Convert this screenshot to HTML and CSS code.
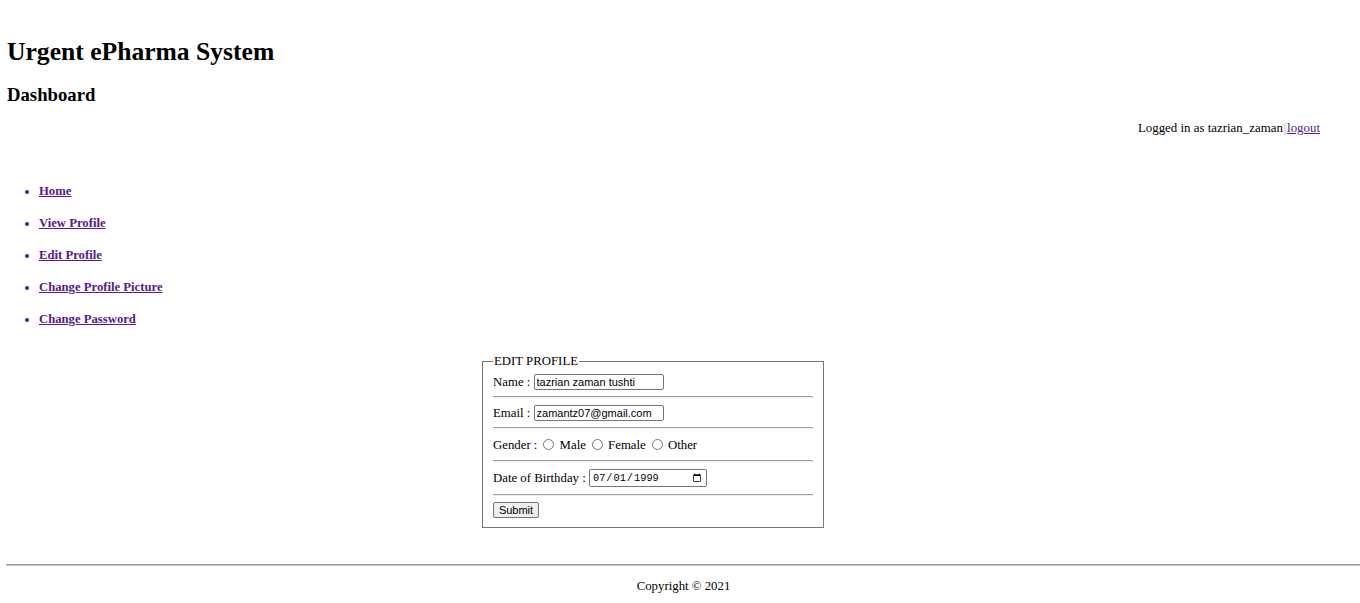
FILE: index.html
```html
<!DOCTYPE html>
<html>
<head>
<meta charset="utf-8">
<title>Urgent ePharma System</title>
<link rel="stylesheet" href="styles.css">
</head>
<body>
<header class="header">
  <h1 class="title">Urgent ePharma System</h1>
  <h3 class="subtitle">Dashboard</h3>
</header>
<div class="userbar">Logged in as tazrian_zaman<span class="sep">||</span><a href="#">logout</a></div>
<ul class="nav">
  <li><a href="#">Home</a></li>
  <li><a href="#">View Profile</a></li>
  <li><a href="#">Edit Profile</a></li>
  <li><a href="#">Change Profile Picture</a></li>
  <li><a href="#">Change Password</a></li>
</ul>
<main class="main">
  <form class="form">
    <fieldset class="box">
      <legend class="legend">EDIT PROFILE</legend>
      <div class="row row-first">Name : <input class="text" type="text" value="tazrian zaman tushti"></div>
      <hr class="sepline">
      <div class="row">Email : <input class="text" type="text" value="zamantz07@gmail.com"></div>
      <hr class="sepline">
      <div class="row row-gender">Gender :<input class="radio" type="radio" name="g"> Male<input class="radio" type="radio" name="g"> Female<input class="radio" type="radio" name="g"> Other</div>
      <hr class="sepline">
      <div class="row row-date">Date of Birthday : <input class="date" type="date" value="1999-07-01"></div>
      <hr class="sepline sepline-last">
      <div class="row"><input class="btn" type="submit" value="Submit"></div>
    </fieldset>
  </form>
</main>
<footer class="footer">
  <hr class="footline">
  <p class="copy">Copyright © 2021</p>
</footer>
</body>
</html>
```
FILE: styles.css
```css
html, body {
  margin: 0;
  padding: 0;
  background: #fff;
}
body {
  padding: 0 0 0 7px;
  font-family: "Liberation Serif", "Times New Roman", serif;
  color: #000;
}
a {
  color: #551a8b;
}
.header {
  padding-top: 33px;
}
.title {
  font-size: 25.6px;
  line-height: 37px;
  margin: 0;
  font-weight: bold;
}
.subtitle {
  font-size: 18.72px;
  line-height: 22px;
  margin: 14px 0 0;
  font-weight: bold;
}
.userbar {
  margin-top: 14px;
  font-size: 12.9px;
  line-height: 16px;
  text-align: right;
  padding-right: 40px;
}
.sep {
  color: #cfc7b8;
  letter-spacing: -1px;
  margin-right: 1px;
}
.nav {
  margin: 47px 0 0;
  padding-left: 32px;
  list-style: disc;
  color: #551a8b;
  font-size: 12.7px;
  font-weight: bold;
}
.nav li {
  line-height: 16px;
  margin-bottom: 16px;
}
.main {
  padding-left: 475px;
  margin-top: 26px;
}
.form {
  margin: 0;
}
.box {
  margin: 0;
  width: 320px;
  border: 1px solid #767676;
  padding: 0 10px 8px;
  font-size: 12.8px;
}
.legend {
  padding: 0 1px;
  line-height: 16px;
}
.row {
  height: 18px;
  line-height: 18px;
  display: flex;
  align-items: center;
  white-space: pre;
}
.row-first {
  margin-top: 4px;
}
.row-gender {
  height: 20px;
}
.row-date {
  height: 20px;
}
.sepline {
  margin: 5px 0 6px;
  border: 0;
  border-top: 1px solid #a0a0a0;
  border-bottom: 1px solid #eee;
}
.sepline-last {
  margin-top: 6px;
  margin-bottom: 5px;
}
.text {
  box-sizing: border-box;
  width: 130px;
  height: 16px;
  font-family: "Liberation Sans", Arial, sans-serif;
  font-size: 11px;
  padding: 0 2px;
  margin: 0;
  border: 1px solid #767676;
  border-radius: 2px;
}
.radio {
  margin: 0 2px 2px 6px;
  width: 11px;
  height: 11px;
}
.date {
  box-sizing: border-box;
  width: 118px;
  height: 18px;
  font-family: "Liberation Mono", "Courier New", monospace;
  font-size: 10.3px;
  padding: 0 2px;
  margin: 0;
  border: 1px solid #767676;
  border-radius: 2px;
}
.btn {
  box-sizing: border-box;
  height: 16px;
  width: 46px;
  font-family: "Liberation Sans", Arial, sans-serif;
  font-size: 11px;
  padding: 0;
  margin: 0;
  background: #efefef;
  border: 1px solid #767676;
  border-radius: 2px;
}
.footer {
  margin-top: 36px;
}
.footline {
  margin: 0 0 0 -1px;
  border: 0;
  border-top: 1px solid #9a9a9a;
  border-bottom: 1px solid #c8c8c8;
}
.copy {
  margin: 12px 0 0;
  text-align: center;
  font-size: 12.8px;
  line-height: 16px;
}
```
